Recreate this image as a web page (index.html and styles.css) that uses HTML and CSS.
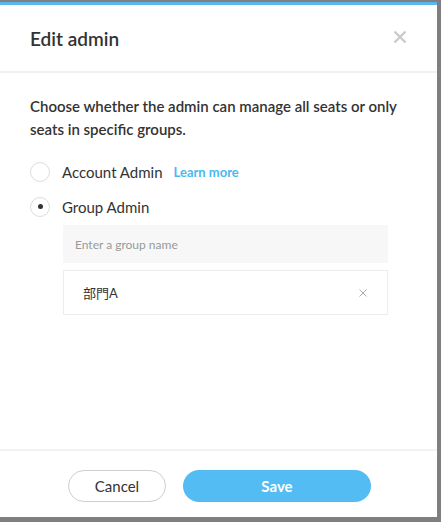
FILE: index.html
```html
<!DOCTYPE html>
<html>
<head>
<meta charset="utf-8">
<link rel="stylesheet" href="styles.css">
</head>
<body>
<div class="dialog">
  <div class="header">
    <h1 class="title">Edit admin</h1>
    <span class="close">
      <svg width="14" height="14" viewBox="0 0 14 14"><path d="M1.5 1.5 L12.5 12.5 M12.5 1.5 L1.5 12.5" stroke="#c8cbce" stroke-width="2.4" stroke-linecap="butt"/></svg>
    </span>
  </div>
  <div class="body">
    <p class="desc">Choose whether the admin can manage all seats or only seats in specific groups.</p>
    <div class="option">
      <span class="radio"></span>
      <span class="label">Account Admin</span>
      <a class="learn">Learn more</a>
    </div>
    <div class="option">
      <span class="radio checked"><span class="dot"></span></span>
      <span class="label">Group Admin</span>
    </div>
    <div class="groups">
      <div class="input">Enter a group name</div>
      <div class="item">
        <span class="item-name">部門A</span>
        <span class="item-x">
          <svg width="8" height="8" viewBox="0 0 8 8"><path d="M0.5 0.5 L7.5 7.5 M7.5 0.5 L0.5 7.5" stroke="#aaa" stroke-width="1"/></svg>
        </span>
      </div>
    </div>
  </div>
  <div class="footer">
    <button class="btn cancel">Cancel</button>
    <button class="btn save">Save</button>
  </div>
</div>
</body>
</html>
```
FILE: styles.css
```css
html, body {
  margin: 0;
  padding: 0;
  background: #7f7f7f;
}
body {
  width: 441px;
  height: 522px;
  padding-top: 2px;
  box-sizing: border-box;
  font-family: Lato, "Noto Sans CJK JP", sans-serif;
}
.dialog {
  width: 437px;
  height: 515px;
  background: #fff;
  border-top: 3px solid #5ab6ef;
  box-sizing: border-box;
  display: flex;
  flex-direction: column;
}
.header {
  height: 68px;
  display: flex;
  align-items: center;
  justify-content: space-between;
  padding: 0 30px 0 30px;
  border-bottom: 2px solid #f2f2f2;
  box-sizing: border-box;
  flex: none;
}
.title {
  margin: 0;
  font-size: 19px;
  font-weight: 600;
  color: #333;
  padding-top: 1px;
}
.close {
  display: flex;
  margin-top: -2px;
}
.body {
  flex: 1;
  padding: 22px 30px 0 30px;
}
.desc {
  margin: 0 0 13px 0;
  font-size: 15px;
  font-weight: 600;
  line-height: 23px;
  color: #333;
}
.option {
  display: flex;
  align-items: center;
  height: 35px;
}
.radio {
  width: 20px;
  height: 20px;
  border: 1px solid #dcdcdc;
  border-radius: 50%;
  box-sizing: border-box;
  margin-right: 12px;
  display: flex;
  align-items: center;
  justify-content: center;
}
.dot {
  width: 5px;
  height: 5px;
  border-radius: 50%;
  background: #333;
}
.label {
  font-size: 15px;
  color: #333;
}
.learn {
  margin-left: 11px;
  font-size: 13px;
  font-weight: 700;
  color: #4cb7f1;
}
.groups {
  margin-left: 33px;
  margin-right: 19px;
  margin-top: 1px;
}
.input {
  height: 38px;
  background: #f7f7f7;
  font-size: 12px;
  color: #999;
  display: flex;
  align-items: center;
  padding-left: 12px;
  margin-bottom: 7px;
}
.item {
  height: 45px;
  border: 1px solid #ededed;
  box-sizing: border-box;
  display: flex;
  align-items: center;
  justify-content: space-between;
  padding: 0 20px 0 19px;
}
.item-name {
  font-size: 13px;
  color: #333;
}
.item-x {
  display: flex;
}
.footer {
  flex: none;
  height: 68px;
  border-top: 2px solid #f2f2f2;
  box-sizing: border-box;
  display: flex;
  align-items: flex-start;
  padding-top: 19px;
  padding-left: 68px;
}
.btn {
  height: 32px;
  border-radius: 16px;
  font-family: Lato, sans-serif;
  font-size: 15px;
  padding: 0;
  box-sizing: border-box;
  line-height: 30px;
}
.cancel {
  width: 98px;
  background: #fff;
  border: 1px solid #cfcfcf;
  color: #333;
}
.save {
  width: 188px;
  margin-left: 17px;
  background: #52bcf3;
  border: none;
  color: #fff;
  font-weight: 700;
}
```
